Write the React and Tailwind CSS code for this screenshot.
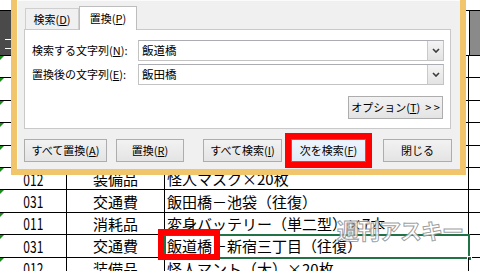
import React from "react";

const dataRows = [
  { a: "012", b: "装備品", c: "怪人マスク×20枚" },
  { a: "031", b: "交通費", c: "飯田橋－池袋（往復）" },
  { a: "011", b: "消耗品", c: "変身バッテリー（単二型）×7本" },
  { a: "031", b: "交通費", c: "飯道橋－新宿三丁目（往復）", selected: true },
  { a: "012", b: "装備品", c: "怪人マント（大）×20枚" },
];

const Triangle = () => (
  <span className="absolute left-0 top-0 w-0 h-0 border-t-[4px] border-r-[4px] border-t-[#1a8a1a] border-r-transparent" />
);

const SheetRow = ({ a = "", b = "", c = "", selected = false }) => (
  <div className="flex h-[22.4px] border-b border-black">
    <div className="relative w-[67px] border-r border-black flex items-center justify-center">
      <Triangle />
      <span className="inline-block scale-x-[0.75] text-[16px] leading-none">{a}</span>
    </div>
    <div className="w-[98px] border-r border-black flex items-center justify-center text-[15px] leading-none">
      {b}
    </div>
    <div className="relative w-[304px] border-r border-black flex items-center pl-[2px] text-[15px] leading-none whitespace-nowrap">
      {selected ? (
        <>
          <span>{c}</span>
          <span className="absolute -left-px -top-px -right-[2px] -bottom-[2px] border-2 border-[#217346]" />
          <span className="absolute -right-[4px] -bottom-[4px] w-[5px] h-[5px] bg-[#217346] border border-white" />
          <span className="absolute -left-[7px] -top-[6px] w-[62px] h-[31px] border-[6px] border-[#ff0000]" />
        </>
      ) : (
        c
      )}
    </div>
    <div className="flex-1" />
  </div>
);

const Chevron = () => (
  <svg width="8" height="5" viewBox="0 0 8 5">
    <path d="M1 1 L4 4 L7 1" fill="none" stroke="#3a3a3a" strokeWidth="1.6" />
  </svg>
);

const Combo = ({ value }) => (
  <div className="flex w-[306px] h-[21px] border border-[#c3c3c3] border-t-[#abadb3] bg-white">
    <div className="flex-1 flex items-center pl-[3px] text-[11.5px]">{value}</div>
    <div className="w-[16px] flex items-center justify-center border-l border-[#c9c9c9] bg-gradient-to-b from-[#f4f4f4] to-[#e3e3e3]">
      <Chevron />
    </div>
  </div>
);

const Btn = ({ children, w, focused = false, className = "" }) => (
  <div
    className={
      (focused
        ? "border-[#3c7fb1] bg-gradient-to-b from-[#edf5fc] to-[#dfecf8] "
        : "border-[#adadad] bg-gradient-to-b from-[#f2f2f2] to-[#e4e4e4] ") +
      "h-[23px] border flex items-center justify-center text-[11px] text-black " +
      w +
      " " +
      className
    }
  >
    {children}
  </div>
);

const Dialog = () => (
  <div className="absolute left-[11px] top-[-6px] w-[455px] h-[181px] border-[6px] border-[#f1c56b] bg-[#f0f0f0]">
    <div className="h-full border-l border-t border-[#fbfbfb] pl-[6px] pt-[5px] text-[11px] text-black">
      <div className="flex items-end h-[23px] pl-px">
        <div className="w-[54px] h-[21px] border border-b-0 border-[#cfcfcf] bg-[#f0f0f0] flex items-center justify-center">
          検索(<span className="underline">D</span>)
        </div>
        <div className="relative z-10 -mb-px w-[58px] h-[24px] border border-b-0 border-[#bdbdbd] bg-white flex items-center justify-center">
          置換(<span className="underline">P</span>)
        </div>
      </div>
      <div className="w-[427px] h-[100px] border border-[#c9c9c9] bg-white pl-[7px] pr-[6px] pt-[10px] flex flex-col">
        <div className="flex items-center h-[21px]">
          <span className="w-[106px]">
            検索する文字列(<span className="underline">N</span>):
          </span>
          <Combo value="飯道橋" />
        </div>
        <div className="flex items-center h-[21px] mt-[3px]">
          <span className="w-[106px]">
            置換後の文字列(<span className="underline">E</span>):
          </span>
          <Combo value="飯田橋" />
        </div>
        <Btn w="w-[95px]" className="self-end mr-px mt-[11px]">
          オプション(<span className="underline">T</span>)&nbsp;&nbsp;&gt; &gt;
        </Btn>
      </div>
      <div className="flex items-center h-[35px] mt-[4px]">
        <Btn w="w-[83px]">
          すべて置換(<span className="underline">A</span>)
        </Btn>
        <Btn w="w-[68px]" className="ml-[9px]">
          置換(<span className="underline">R</span>)
        </Btn>
        <Btn w="w-[79px]" className="ml-[19px]">
          すべて検索(<span className="underline">I</span>)
        </Btn>
        <div className="ml-[3px] border-[6px] border-[#ff0000]">
          <Btn w="w-[75px]" focused>
            次を検索(<span className="underline">F</span>)
          </Btn>
        </div>
        <Btn w="w-[69px]" className="ml-[11px]">
          閉じる
        </Btn>
      </div>
    </div>
  </div>
);

export default function App() {
  return (
    <div className="relative w-[480px] h-[271px] overflow-hidden bg-white text-black font-['Noto_Sans_CJK_JP',sans-serif]">
      <div className="flex flex-col">
        <div className="h-[11px] border-b border-black" />
        <div className="flex h-[45px] border-b border-black">
          <div className="relative w-[67px] bg-[#4a4a4a]">
            <span className="absolute left-[5px] top-[28px] w-[6px] h-px bg-white" />
            <span className="absolute left-[5px] top-[37px] w-[6px] h-px bg-white" />
          </div>
          <div className="w-[402px]" />
          <div className="flex-1 bg-[#8a8a8a] border-l border-black" />
        </div>
        {[0, 1, 2, 3, 4].map((i) => (
          <SheetRow key={i} />
        ))}
        {dataRows.map((r, i) => (
          <SheetRow key={"d" + i} {...r} />
        ))}
      </div>

      <Dialog />

      <div className="absolute left-[337px] top-[218px] text-[22px] font-bold leading-none tracking-[-1px] text-white/85 [-webkit-text-stroke:1px_rgba(140,140,140,0.85)]">
        週刊アスキー
      </div>
    </div>
  );
}
